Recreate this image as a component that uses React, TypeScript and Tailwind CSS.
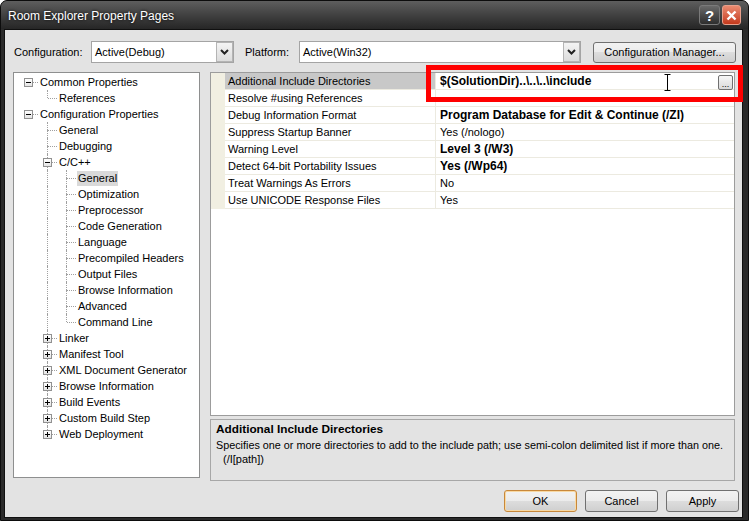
import React from "react";

type TreeItem = {
  label: string;
  level: number;
  box?: "-" | "+";
  up?: boolean;
  down?: boolean;
  guide?: boolean;
  selected?: boolean;
};

const tree: TreeItem[] = [
  { label: "Common Properties", level: 0, box: "-" },
  { label: "References", level: 1, up: true },
  { label: "Configuration Properties", level: 0, box: "-" },
  { label: "General", level: 1, up: true, down: true },
  { label: "Debugging", level: 1, up: true, down: true },
  { label: "C/C++", level: 1, box: "-", up: true, down: true },
  { label: "General", level: 2, up: true, down: true, guide: true, selected: true },
  { label: "Optimization", level: 2, up: true, down: true, guide: true },
  { label: "Preprocessor", level: 2, up: true, down: true, guide: true },
  { label: "Code Generation", level: 2, up: true, down: true, guide: true },
  { label: "Language", level: 2, up: true, down: true, guide: true },
  { label: "Precompiled Headers", level: 2, up: true, down: true, guide: true },
  { label: "Output Files", level: 2, up: true, down: true, guide: true },
  { label: "Browse Information", level: 2, up: true, down: true, guide: true },
  { label: "Advanced", level: 2, up: true, down: true, guide: true },
  { label: "Command Line", level: 2, up: true, guide: true },
  { label: "Linker", level: 1, box: "+", up: true, down: true },
  { label: "Manifest Tool", level: 1, box: "+", up: true, down: true },
  { label: "XML Document Generator", level: 1, box: "+", up: true, down: true },
  { label: "Browse Information", level: 1, box: "+", up: true, down: true },
  { label: "Build Events", level: 1, box: "+", up: true, down: true },
  { label: "Custom Build Step", level: 1, box: "+", up: true, down: true },
  { label: "Web Deployment", level: 1, box: "+", up: true },
];

const props = [
  { name: "Additional Include Directories", value: "$(SolutionDir)..\\..\\..\\include", bold: true, editing: true },
  { name: "Resolve #using References", value: "" },
  { name: "Debug Information Format", value: "Program Database for Edit & Continue (/ZI)", bold: true },
  { name: "Suppress Startup Banner", value: "Yes (/nologo)" },
  { name: "Warning Level", value: "Level 3 (/W3)", bold: true },
  { name: "Detect 64-bit Portability Issues", value: "Yes (/Wp64)", bold: true },
  { name: "Treat Warnings As Errors", value: "No" },
  { name: "Use UNICODE Response Files", value: "Yes" },
];

const btn =
  "flex items-center justify-center rounded-[3px] border border-[#707070] bg-[linear-gradient(#f2f2f2,#ebebeb_50%,#dddddd_50%,#cfcfcf)] text-black";

function ExpandBox({ sign }: { sign: "-" | "+" }) {
  return (
    <span className="absolute left-[5px] top-[4px] w-[9px] h-[9px] border border-[#919191] bg-[linear-gradient(#ffffff,#e4e4e4)] z-10">
      <span className="absolute left-[1px] top-[3px] w-[5px] h-px bg-black" />
      {sign === "+" && <span className="absolute left-[3px] top-[1px] w-px h-[5px] bg-black" />}
    </span>
  );
}

function TreeRow({ item }: { item: TreeItem }) {
  const cols = [];
  for (let c = 0; c < item.level; c++) {
    cols.push(
      <span key={c} className="relative w-[19px] h-[16px] shrink-0">
        {c === 1 && item.guide && (
          <span className="absolute left-[9px] top-0 h-[16px] border-l border-dotted border-[#a0a0a0]" />
        )}
      </span>
    );
  }
  return (
    <div className="flex h-[16px] items-center">
      {cols}
      <span className="relative w-[19px] h-[16px] shrink-0">
        {item.up && <span className="absolute left-[9px] top-0 h-[8px] border-l border-dotted border-[#a0a0a0]" />}
        {item.down && <span className="absolute left-[9px] top-[8px] h-[8px] border-l border-dotted border-[#a0a0a0]" />}
        <span className="absolute left-[10px] right-0 top-[8px] border-t border-dotted border-[#a0a0a0]" />
        {item.box && <ExpandBox sign={item.box} />}
      </span>
      <span
        className={`ml-[1px] px-[1px] leading-[15px] whitespace-nowrap ${item.selected ? "bg-[#d9d9d9]" : ""}`}
      >
        {item.label}
      </span>
    </div>
  );
}

function Combo({ text, width }: { text: string; width: string }) {
  return (
    <div className={`${width} h-[22px] flex items-center border border-[#a4a4a4] bg-white`}>
      <span className="flex-1 pl-[3px] whitespace-nowrap">{text}</span>
      <span className="w-[17px] h-[20px] flex items-center justify-center border border-[#b4b4b4] bg-[linear-gradient(#f4f4f4,#dcdcdc)]">
        <svg width="9" height="6" viewBox="0 0 9 6">
          <path d="M1 1 L4.5 4.5 L8 1" fill="none" stroke="#222" strokeWidth="2" />
        </svg>
      </span>
    </div>
  );
}

export default function App() {
  return (
    <div className="relative w-[749px] h-[521px] bg-white font-['Liberation_Sans',Arial,sans-serif] text-[11px] text-black overflow-hidden">
      <div className="h-full flex flex-col rounded-t-[7px] border border-[#0c0c0c] bg-[#2a2a2a]">
        {/* title bar */}
        <div className="h-[28px] shrink-0 flex items-start rounded-t-[6px] bg-linear-to-b from-[#5e5e5e] to-[#262626]">
          <span className="pl-[7px] pt-[8px] text-[12px] leading-[15px] text-white [text-shadow:0_0_3px_#000]">
            Room Explorer Property Pages
          </span>
          <div className="ml-auto mt-[4px] mr-[7px] flex gap-[2px]">
            <span className="w-[21px] h-[20px] flex items-center justify-center rounded-[3px] border border-[#7a7a7a] bg-linear-to-b from-[#6a6a6a] to-[#2e2e2e] text-white text-[15px] font-bold leading-none">
              ?
            </span>
            <span className="w-[19px] h-[20px] flex items-center justify-center rounded-[3px] border border-[#e8a08c] bg-linear-to-b from-[#ea8a70] to-[#c4381a]">
              <svg width="11" height="11" viewBox="0 0 11 11">
                <path d="M1.5 1.5 L9.5 9.5 M9.5 1.5 L1.5 9.5" stroke="#fff" strokeWidth="2.4" />
              </svg>
            </span>
          </div>
        </div>

        {/* client area */}
        <div className="flex-1 ml-[3px] mr-[5px] mb-[2px] border border-[#101010] bg-[#e3e3e3] pl-[8px] pt-[11px] flex flex-col">
          <div className="flex items-center h-[22px]">
            <span className="w-[78px] pl-[1px]">Configuration:</span>
            <Combo text="Active(Debug)" width="w-[143px]" />
            <span className="ml-[11px] w-[54px]">Platform:</span>
            <Combo text="Active(Win32)" width="w-[282px]" />
            <div className={`${btn} ml-[12px] w-[143px] h-[21px]`}>Configuration Manager...</div>
          </div>

          <div className="flex mt-[9px] gap-[10px]">
            <div className="w-[187px] h-[406px] border border-[#8e8f8f] bg-white pl-[5px] pt-[1px]">
              {tree.map((item, i) => (
                <TreeRow key={i} item={item} />
              ))}
            </div>

            <div className="w-[525px] flex flex-col gap-[3px]">
              <div className="h-[344px] border border-[#9c9c9c] bg-white">
                {props.map((p, i) => (
                  <div key={i} className="flex h-[17px]">
                    <span className="w-[14px] shrink-0 bg-[#f1efe2]" />
                    <span
                      className={`w-[211px] shrink-0 pl-[3px] pt-[1px] leading-[15px] border-b border-r border-[#eceae0] whitespace-nowrap ${
                        i === 0 ? "bg-[#c8c8c8]" : ""
                      }`}
                    >
                      {p.name}
                    </span>
                    <span
                      className={`flex-1 flex items-start pl-[4px] border-b border-[#eceae0] whitespace-nowrap ${
                        p.bold ? "font-bold text-[12px] leading-[16px]" : "pt-[1px] leading-[15px]"
                      }`}
                    >
                      <span className="flex-1">{p.value}</span>
                      {p.editing && (
                        <span className="mt-[2px] mr-[1px] w-[15px] h-[15px] flex items-end justify-center rounded-[2px] border border-[#707070] bg-[linear-gradient(#f6f6f6,#dadada)] text-[9px] leading-[10px] font-normal">
                          ...
                        </span>
                      )}
                    </span>
                  </div>
                ))}
              </div>
              <div className="h-[62px] border border-[#a7a7a7] bg-[#e3e3e3] pl-[5px] pt-[2px] leading-[14px]">
                <div className="font-bold text-[11.8px]">Additional Include Directories</div>
                <div className="mt-[2px] text-[10.8px]">
                  Specifies one or more directories to add to the include path; use semi-colon delimited list if more than one.
                </div>
                <div className="pl-[7px]">(/I[path])</div>
              </div>
            </div>
          </div>

          <div className="flex justify-end gap-[8px] mt-[9px] pr-[3px]">
            <div className={`${btn} w-[73px] h-[22px] border-[#c8883a] shadow-[inset_0_0_0_1px_#f8d9a4]`}>OK</div>
            <div className={`${btn} w-[73px] h-[22px]`}>Cancel</div>
            <div className={`${btn} w-[73px] h-[22px]`}>Apply</div>
          </div>
        </div>
      </div>

      {/* annotation box over the edited value */}
      <div className="absolute left-[426px] top-[65px] w-[317px] h-[37px] border-[5px] border-[#ff0000]" />
      {/* text cursor */}
      <svg className="absolute left-[664px] top-[74px]" width="7" height="17" viewBox="0 0 7 17">
        <path d="M0.5 0.5 H6.5 M3.5 0.5 V16.5 M0.5 16.5 H6.5" stroke="#000" strokeWidth="1" fill="none" />
      </svg>
    </div>
  );
}
